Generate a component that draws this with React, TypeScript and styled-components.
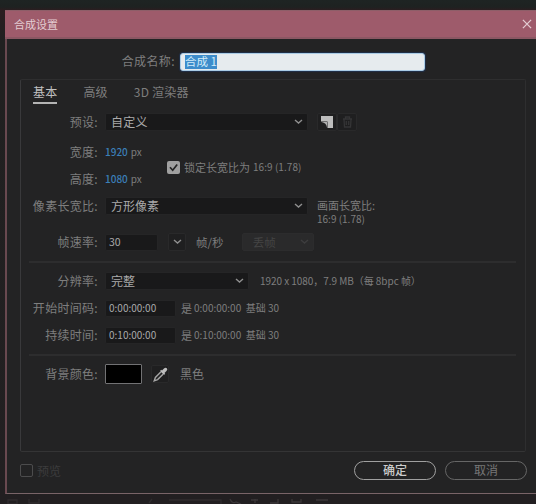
import React from "react";
import styled, { createGlobalStyle } from "styled-components";

const Global = createGlobalStyle`
  * { box-sizing: border-box; }
  body {
    margin: 0;
    overflow: hidden;
    background: #1e2021;
    font-family: "Noto Sans CJK SC", "Noto Sans", sans-serif;
    font-size: 12px;
    color: #7e7e7e;
  }
`;

const Backdrop = styled.div`
  width: 536px;
  height: 504px;
  padding: 10px 0 0 5px;
  background: linear-gradient(#1e2423 0, #1e2221 7px, #2b1d20 10px, #202020 40px, #221f21 100%);
  display: flex;
  flex-direction: column;
`;

const Dialog = styled.div`
  height: 484px;
  flex: none;
  display: flex;
  flex-direction: column;
  background: #232324;
  border-left: 2px solid #694950;
  border-bottom: 1px solid #796468;
`;

const TitleBar = styled.header`
  height: 29px;
  flex: none;
  margin-left: -2px;
  padding: 0 4px 1px 9px;
  display: flex;
  align-items: center;
  justify-content: space-between;
  background: #9e5b6b;
  border-top: 1px solid #8d5e68;
  border-bottom: 2px solid #8b5763;
  color: #e4cdd3;
`;

const Text = styled.span<{ $size?: number; $color?: string; $spacing?: number; $weight?: number }>`
  font-size: ${(p) => p.$size ?? 12}px;
  line-height: 16px;
  color: ${(p) => p.$color ?? "inherit"};
  letter-spacing: ${(p) => p.$spacing ?? 0}px;
  font-weight: ${(p) => p.$weight ?? 400};
  white-space: pre;
`;

const NameRow = styled.div`
  height: 19px;
  flex: none;
  margin-top: 13px;
  display: flex;
  align-items: center;
`;

const NameLabel = styled.label`
  width: 168px;
  text-align: right;
  letter-spacing: 0.4px;
  line-height: 16px;
  padding-bottom: 2px;
`;

const NameField = styled.div`
  width: 245px;
  height: 18px;
  margin-left: 5px;
  padding: 0 4px;
  display: flex;
  align-items: center;
  background: #e6ebee;
  border: 1px solid #a9cbe5;
  border-radius: 3px;
  box-shadow: 0 0 1px 1px #21304a;
`;

const Selection = styled.span`
  height: 14px;
  width: 32px;
  background: #3d8ccb;
  color: #d3ecfa;
  font-size: 11.5px;
  line-height: 13px;
  white-space: pre;
`;

const Panel = styled.section`
  width: 506px;
  height: 373px;
  flex: none;
  margin: 8px 0 0 13px;
  border: 1px solid #2e2e2f;
  border-left-color: #39393b;
  border-bottom-color: #343435;
  border-radius: 2px;
`;

const Tabs = styled.nav`
  display: flex;
  gap: 26px;
  height: 24px;
  padding: 4px 0 0 12px;
`;

const Tab = styled.div<{ $active?: boolean }>`
  height: 20px;
  line-height: 16px;
  font-size: 12px;
  letter-spacing: 0.2px;
  white-space: pre;
  color: ${(p) => (p.$active ? "#c0c0c0" : "#7e7e7e")};
  border-bottom: 2px solid ${(p) => (p.$active ? "#b4b4b4" : "transparent")};
`;

const Row = styled.div<{ $top?: number; $h?: number }>`
  display: flex;
  align-items: center;
  height: ${(p) => p.$h ?? 20}px;
  margin-top: ${(p) => p.$top ?? 7}px;
`;

const Label = styled.label`
  width: 77px;
  margin-right: 7px;
  flex: none;
  display: flex;
  justify-content: flex-end;
  line-height: 16px;
  letter-spacing: 0.3px;
  white-space: nowrap;
`;

const Field = styled.div<{ $w: number; $disabled?: boolean; $h?: number; $inset?: number }>`
  width: ${(p) => p.$w}px;
  height: ${(p) => p.$h ?? 18}px;
  flex: none;
  padding: 0 4px 0 ${(p) => p.$inset ?? 5}px;
  display: flex;
  align-items: center;
  justify-content: space-between;
  border-radius: 2px;
  background: ${(p) => (p.$disabled ? "#2a2a2b" : "#19191a")};
  border: 1px solid ${(p) => (p.$disabled ? "#2c2c2d" : "#252526")};
  color: ${(p) => (p.$disabled ? "#444" : "#aaa")};
`;

const Gap = styled.span<{ $w: number }>`
  width: ${(p) => p.$w}px;
  flex: none;
`;

const IconBox = styled.div<{ $w?: number }>`
  width: ${(p) => p.$w ?? 18}px;
  height: 18px;
  flex: none;
  display: flex;
  align-items: center;
  justify-content: center;
  background: #1f1f20;
  border: 1px solid #29292a;
  border-radius: 2px;
`;

const SizeBlock = styled.div`
  display: flex;
  align-items: center;
  height: 47px;
  margin-top: 10px;
`;

const SizeColumn = styled.div`
  width: 144px;
  flex: none;
`;

const Check = styled.span<{ $on?: boolean }>`
  width: 13px;
  height: 13px;
  flex: none;
  display: flex;
  align-items: center;
  justify-content: center;
  border-radius: 2px;
  background: ${(p) => (p.$on ? "#a0a0a0" : "transparent")};
  border: ${(p) => (p.$on ? "0" : "1.5px solid #4c4c4d")};
`;

const LockOption = styled.div`
  display: flex;
  align-items: center;
  padding-top: 3px;
`;

const Lines = styled.div`
  display: flex;
  flex-direction: column;
  align-self: flex-start;
  margin-top: 3px;
  & > span { line-height: 14px; }
`;

const Divider = styled.hr`
  height: 2px;
  margin: 9px 9px 0 8px;
  border: 0;
  background: #2d2d2e;
`;

const Swatch = styled.div`
  width: 37px;
  height: 20px;
  flex: none;
  background: #000;
  border: 1px solid #727274;
  border-radius: 1px;
`;

const Footer = styled.footer`
  display: flex;
  align-items: center;
  height: 37px;
  padding: 0 9px 0 13px;
`;

const Spacer = styled.span`
  flex: 1;
`;

const Pill = styled.button<{ $primary?: boolean }>`
  width: 82px;
  height: 19px;
  padding: 0 0 1px;
  border-radius: 10px;
  background: transparent;
  border: ${(p) => (p.$primary ? "1.5px solid #a0a0a0" : "1px solid #666")};
  color: ${(p) => (p.$primary ? "#ccc" : "#777")};
  font: ${(p) => (p.$primary ? 500 : 400)} 12px/14px "Noto Sans CJK SC", sans-serif;
`;

const Behind = styled.div`
  height: 10px;
  overflow: hidden;
`;

const Chevron = ({ color = "#8f8f8f" }: { color?: string }) => (
  <svg width="9" height="6" viewBox="0 0 9 6" fill="none" stroke={color} strokeWidth="1.4">
    <path d="M1 1l3.5 3L8 1" />
  </svg>
);

const CloseIcon = () => (
  <svg width="10" height="10" viewBox="0 0 11 11" stroke="#e4cdd3" strokeWidth="1.4">
    <path d="M1 1l9 9M10 1l-9 9" />
  </svg>
);

const PresetIcon = () => (
  <svg width="12" height="12" viewBox="0 0 12 12">
    <path d="M0 0h12v12H6.5V5.5H0z" fill="#bdbdbd" />
    <path d="M.5 6H6v5.5Q5.5 6.8.5 6z" fill="#b0b0b0" />
  </svg>
);

const TrashIcon = () => (
  <svg width="11" height="12" viewBox="0 0 11 12" fill="none" stroke="#353536" strokeWidth="1.3">
    <path d="M1 3h9M3.5 2.5V1h4v1.5M2 3.5l.5 7.5h6L9 3.5M4.3 5v4M6.7 5v4" />
  </svg>
);

const Eyedropper = () => (
  <svg width="15" height="15" viewBox="0 0 15 15">
    <path d="M9 3.5l2-2Q12.6.2 13.8 1.3T13.5 4l-2 2 .7.8-1.2 1.2L7 4l1.2-1.2z" fill="#bdbdbd" />
    <path d="M7.8 5L2.4 10.4 1.2 13.8 4.6 12.6 10 7.2" fill="none" stroke="#a5a5a5" strokeWidth="1.4" />
  </svg>
);

const Tick = () => (
  <svg width="11" height="11" viewBox="0 0 11 11" fill="none" stroke="#242424" strokeWidth="1.7">
    <path d="M2 5.2l2.7 3L9.2 2.5" />
  </svg>
);

const HiddenToolbar = () => (
  <svg width="531" height="10" viewBox="0 0 531 10" fill="none" stroke="#3b3739" strokeWidth="1.3">
    <path d="M3 2h9v4H3zM24 1v4h10V1M144 5l3-4M164 2h52v4" opacity=".55" />
    <path d="M225 1q2 5 6 3l5 2M246 2h7M250 1v4M265 5h8V1M287 1v3h9V1M311 2h12" />
  </svg>
);

const blue = "#3b7fb8";

export default function App() {
  return (
    <>
      <Global />
      <Backdrop>
        <Dialog>
          <TitleBar>
            <Text $size={11}>合成设置</Text>
            <CloseIcon />
          </TitleBar>

          <NameRow>
            <NameLabel>合成名称:</NameLabel>
            <NameField>
              <Selection>合成 1</Selection>
            </NameField>
          </NameRow>

          <Panel>
            <Tabs>
              <Tab $active>基本</Tab>
              <Tab>高级</Tab>
              <Tab>3D 渲染器</Tab>
            </Tabs>

            <Row $top={8}>
              <Label>预设:</Label>
              <Field $w={203}>
                <Text $spacing={0.3}>自定义</Text>
                <Chevron />
              </Field>
              <Gap $w={9} />
              <IconBox $w={20}><PresetIcon /></IconBox>
              <IconBox $w={20}><TrashIcon /></IconBox>
            </Row>

            <SizeBlock>
              <SizeColumn>
                <Row $top={0}>
                  <Label>宽度:</Label>
                  <Text $size={10} $color={blue} $weight={500}>1920</Text>
                  <Gap $w={3} />
                  <Text $size={10}>px</Text>
                </Row>
                <Row>
                  <Label>高度:</Label>
                  <Text $size={10} $color={blue} $weight={500}>1080</Text>
                  <Gap $w={3} />
                  <Text $size={10}>px</Text>
                </Row>
              </SizeColumn>
              <Gap $w={2} />
              <LockOption>
                <Check $on><Tick /></Check>
                <Gap $w={4} />
                <Text $size={11}>锁定长宽比为</Text>
                <Gap $w={3} />
                <Text $size={10} $spacing={0.05}>16:9 (1.78)</Text>
              </LockOption>
            </SizeBlock>

            <Row $h={22} $top={6}>
              <Label>像素长宽比:</Label>
              <Field $w={203}>
                <Text>方形像素</Text>
                <Chevron />
              </Field>
              <Gap $w={9} />
              <Lines>
                <Text $size={11}>画面长宽比:</Text>
                <Text $size={10}>16:9 (1.78)</Text>
              </Lines>
            </Row>

            <Row $top={15}>
              <Label>帧速率:</Label>
              <Field $w={53} $h={17} $inset={3}>
                <Text $size={10.5}>30</Text>
              </Field>
              <Gap $w={10} />
              <IconBox><Chevron /></IconBox>
              <Gap $w={10} />
              <Text $size={11.5}>帧/秒</Text>
              <Gap $w={18} />
              <Field $w={72} $disabled>
                <Text $size={11.5}>  丢帧</Text>
                <Chevron color="#3d3d3e" />
              </Field>
            </Row>

            <Divider />

            <Row $top={8}>
              <Label>分辨率:</Label>
              <Field $w={144}>
                <Text>完整</Text>
                <Chevron />
              </Field>
              <Gap $w={11} />
              <Text $size={10} $spacing={-0.05}>1920 x 1080，7.9 MB（每 8bpc 帧）</Text>
            </Row>
            <Row>
              <Label>开始时间码:</Label>
              <Field $w={71} $h={17} $inset={3}><Text $size={10}>0:00:00:00</Text></Field>
              <Gap $w={5} />
              <Text $size={11}>是</Text>
              <Gap $w={2} />
              <Text $size={10}>0:00:00:00  基础 30</Text>
            </Row>
            <Row>
              <Label>持续时间:</Label>
              <Field $w={71} $h={17} $inset={3}><Text $size={10}>0:10:00:00</Text></Field>
              <Gap $w={5} />
              <Text $size={11}>是</Text>
              <Gap $w={2} />
              <Text $size={10}>0:10:00:00  基础 30</Text>
            </Row>

            <Divider />

            <Row $top={8}>
              <Label>背景颜色:</Label>
              <Swatch />
              <Gap $w={9} />
              <IconBox><Eyedropper /></IconBox>
              <Gap $w={11} />
              <Text>黑色</Text>
            </Row>
          </Panel>

          <Footer>
            <Check />
            <Gap $w={4} />
            <Text $color="#3c3c3d">预览</Text>
            <Spacer />
            <Pill $primary>确定</Pill>
            <Gap $w={9} />
            <Pill>取消</Pill>
          </Footer>
        </Dialog>
        <Behind>
          <HiddenToolbar />
        </Behind>
      </Backdrop>
    </>
  );
}
